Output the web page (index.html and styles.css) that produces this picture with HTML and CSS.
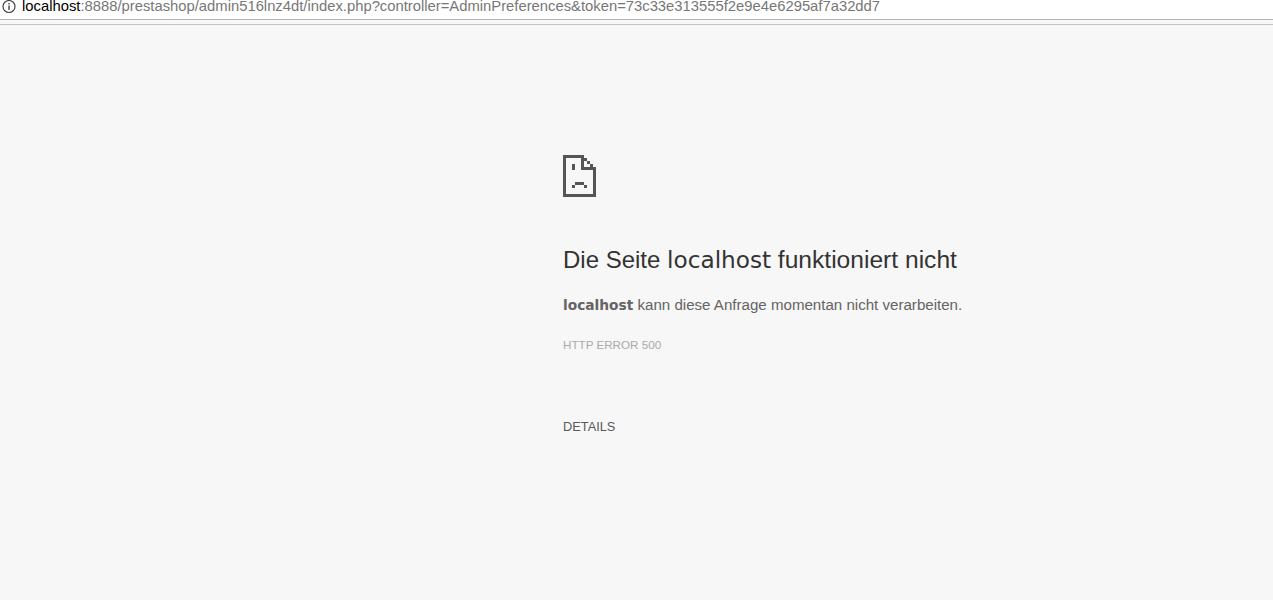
FILE: index.html
```html
<!DOCTYPE html>
<html lang="de">
<head>
    <meta charset="UTF-8">
    <title>localhost</title>
    <link rel="stylesheet" href="styles.css">
</head>
<body>
    <!-- address bar -->
    <header class="toolbar">
        <svg class="info-icon" width="14" height="14" viewBox="0 0 14 14">
            <circle cx="7" cy="6.5" r="6" fill="none" stroke="#444" stroke-width="1.2"/>
            <rect x="6.3" y="5.5" width="1.4" height="4.4" fill="#444"/>
            <rect x="6.3" y="2.9" width="1.4" height="1.5" fill="#444"/>
        </svg>
        <div class="url"><span class="host">localhost</span>:8888/prestashop/admin516lnz4dt/index.php?controller=AdminPreferences&amp;token=73c33e313555f2e9e4e6295af7a32dd7</div>
    </header>

    <!-- error page -->
    <main class="error-page">
        <div class="error-box">
            <svg class="sad-tab" width="33" height="42" viewBox="0 0 11 14" shape-rendering="crispEdges">
                <path fill="#555" d="M0 0h7v1h1v1h1v1h1v1h1v10H0zM1 1v12h9V5H6V1zM7 2v2h2V3H8V2z"/>
                <path fill="#555" d="M3 3h1v2H3zM4 9h3v1H4zM3 10h1v1H3zM7 10h1v1H7z"/>
            </svg>
            <h1 class="title">Die Seite <span class="site">localhost</span> <span class="title-end">funktioniert nicht</span></h1>
            <p class="summary"><strong class="site">localhost</strong> kann diese Anfrage momentan nicht verarbeiten.</p>
            <div class="error-code">HTTP ERROR 500</div>
            <div class="details">DETAILS</div>
        </div>
    </main>
</body>
</html>
```

FILE: styles.css
```css
body {
    font-family: "Liberation Sans", Arial, sans-serif;
    margin: 0;
    padding: 0;
    background-color: #f7f7f7;
}

.toolbar {
    display: flex;
    align-items: flex-start;
    gap: 6px;
    height: 19px;
    padding-left: 2px;
    background-color: #ffffff;
    border-bottom: 1px solid #b4b4b4;
    margin-bottom: 4px;
    overflow: hidden;
}

.info-icon {
    flex-shrink: 0;
}

.url {
    font-size: 14.8px;
    line-height: 12px;
    color: #777777;
    white-space: nowrap;
}

.host {
    color: #000000;
}

.error-page {
    border-top: 1px solid #c4c4c4;
    height: 575px;
    overflow: hidden;
}

.error-box {
    margin-left: 563px;
    padding-top: 130px;
    width: 600px;
}

.sad-tab {
    display: block;
}

.title {
    font-size: 24px;
    font-weight: 400;
    line-height: 30px;
    color: #333333;
    margin: 48px 0 0;
}

.site {
    font-family: "DejaVu Sans", sans-serif;
    font-size: 23.2px;
}

.title-end {
    font-size: 24.6px;
}

.summary {
    font-size: 15.1px;
    line-height: 20px;
    color: #646464;
    margin: 20px 0 0;
}

.summary .site {
    font-size: 13.75px;
    font-weight: 700;
}

.error-code {
    font-size: 11.65px;
    line-height: 14px;
    color: #aaaaaa;
    margin-top: 23px;
}

.details {
    font-size: 12.8px;
    line-height: 16px;
    color: #5a5a5a;
    margin-top: 67px;
}
```
